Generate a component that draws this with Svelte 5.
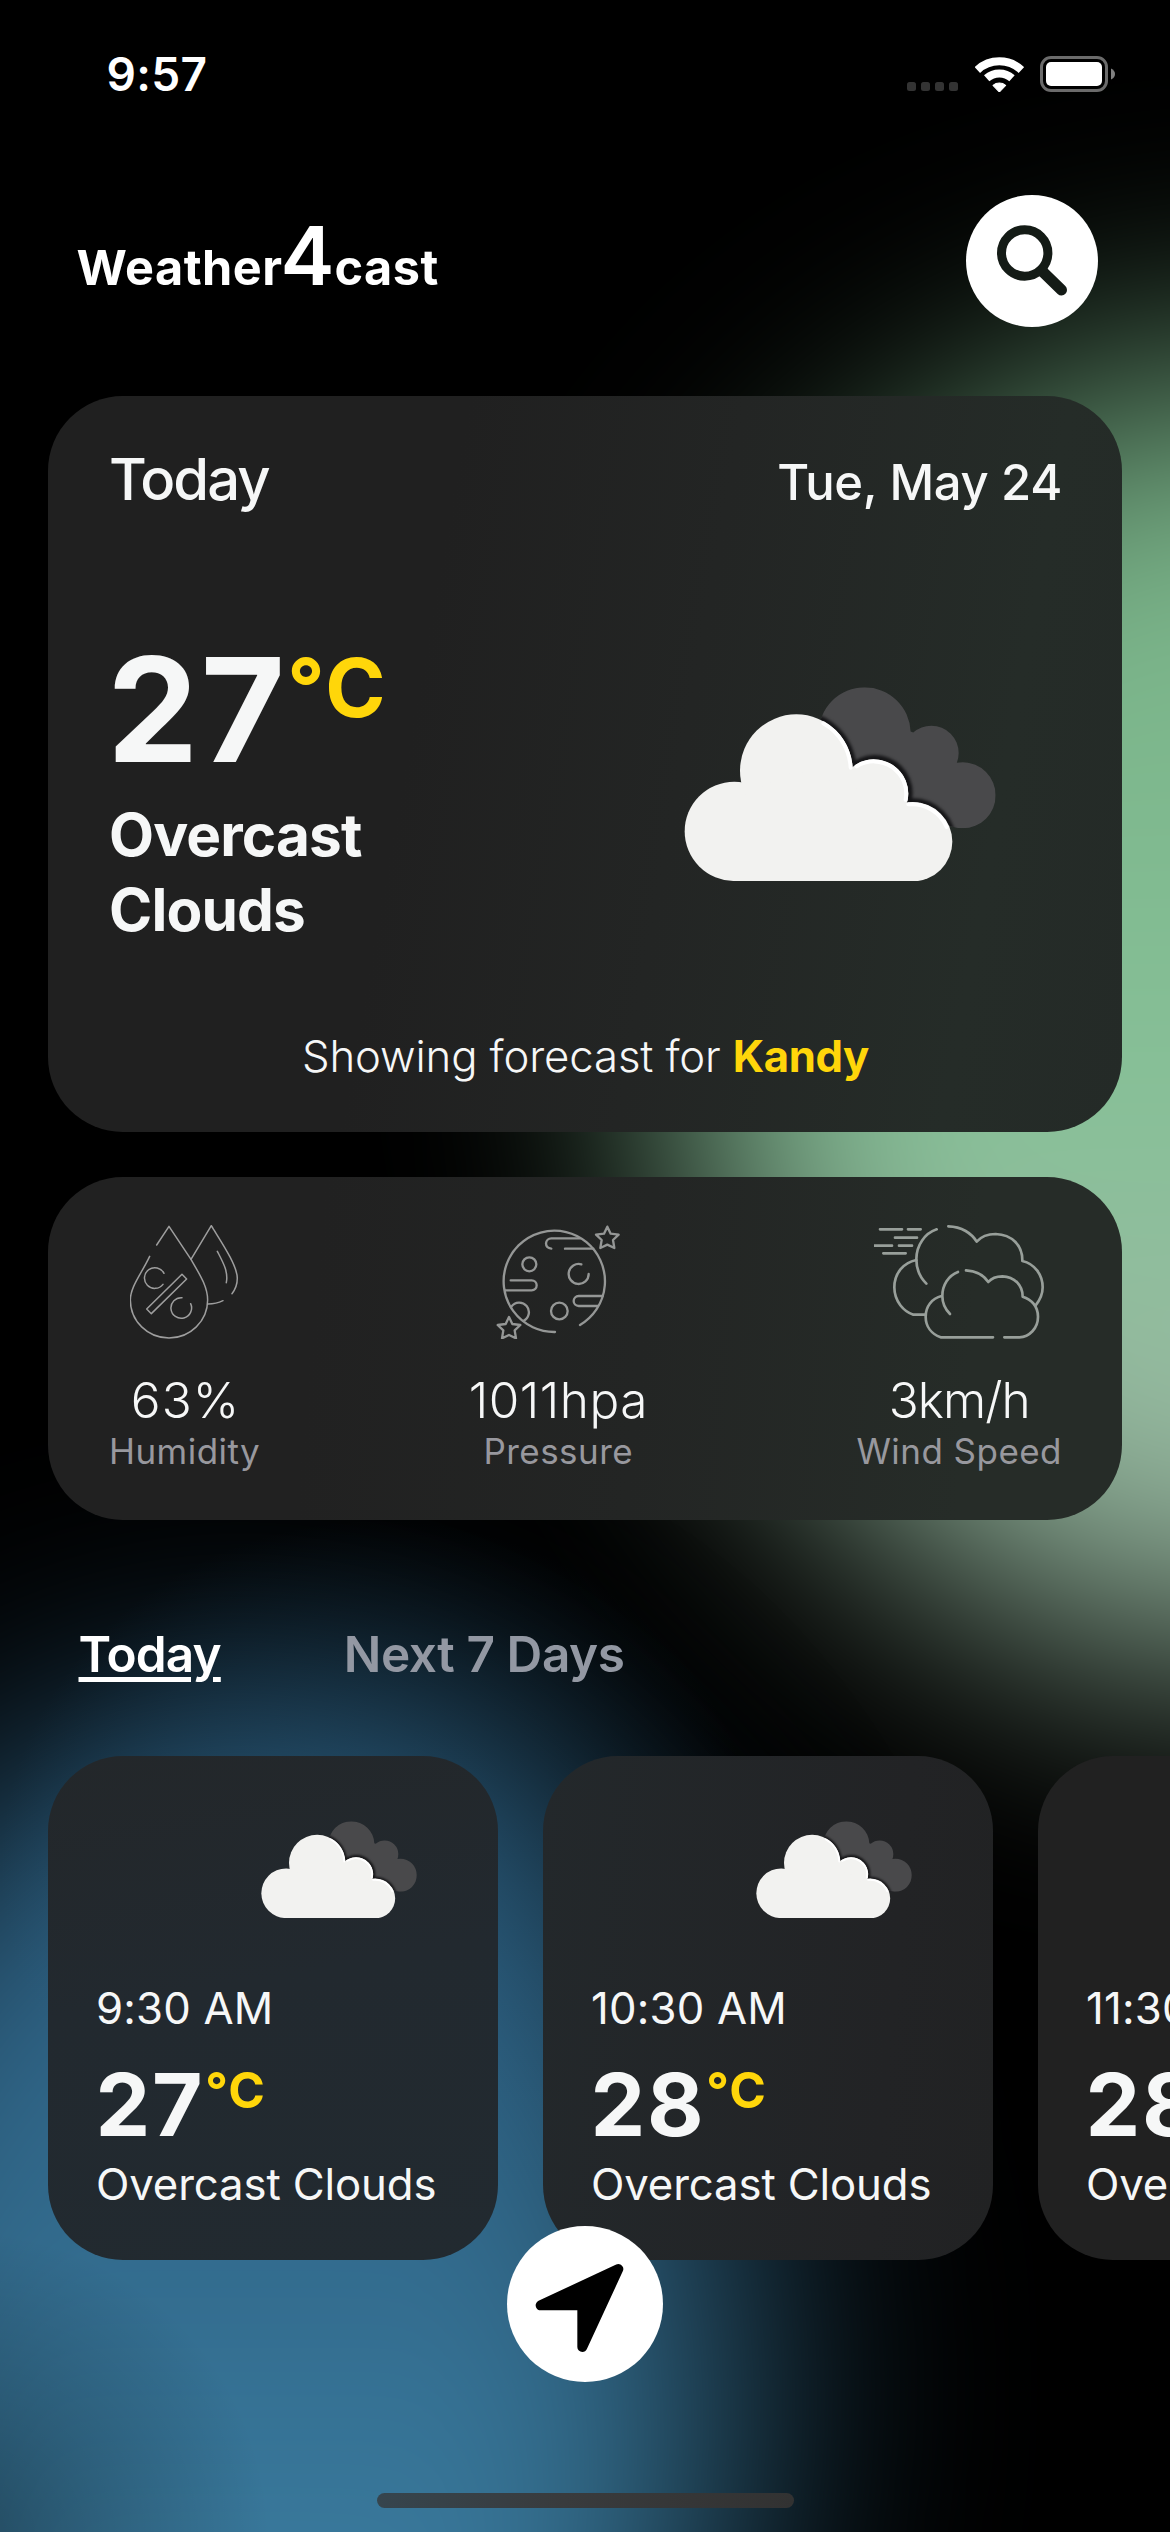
<script>
  const metrics = [
    { kind: 'humidity', value: '63%', label: 'Humidity' },
    { kind: 'pressure', value: '1011hpa', label: 'Pressure' },
    { kind: 'wind', value: '3km/h', label: 'Wind Speed' }
  ];
  const hours = [
    { time: '9:30 AM', temp: 27, sky: 'Overcast Clouds' },
    { time: '10:30 AM', temp: 28, sky: 'Overcast Clouds' },
    { time: '11:30 AM', temp: 28, sky: 'Overcast Clouds' }
  ];
</script>

{#snippet clouds(id)}
  <svg class="clouds" viewBox="130 140 936 584" aria-hidden="true">
    <defs>
      <clipPath id={id}>
        <circle cx="672" cy="279" r="138" />
        <circle cx="872" cy="338" r="82" />
        <circle cx="966" cy="465" r="99" />
        <path d="M600 250L800 270L880 300L940 400L960 564L760 500L600 380Z" />
      </clipPath>
    </defs>
    <g clip-path="url(#{id})">
      <rect x="130" y="140" width="936" height="584" fill="#49494b" />
      <g class="edge" fill="#151517">
        <circle cx="469" cy="389" r="178" />
        <circle cx="702" cy="458" r="114" />
        <circle cx="817" cy="603" r="129" />
      </g>
    </g>
    <g fill="#f2f2f0">
      <circle cx="281" cy="573" r="149" />
      <circle cx="467" cy="391" r="169" />
      <circle cx="700" cy="460" r="103" />
      <circle cx="816" cy="604" r="119" />
      <path d="M281 480L467 391L700 460L816 560V723H281Z" />
    </g>
    <g fill="none" stroke="#fff" stroke-width="12" stroke-linecap="round">
      <path d="M548 249A163 163 0 0 1 630 382" />
      <path d="M648 378A97 97 0 0 1 795 478" />
      <path d="M803 492A113 113 0 0 1 918 560" />
    </g>
  </svg>
{/snippet}

<div class="screen">
  <div class="glow green"></div>
  <div class="glow blue"></div>
  <div class="glow crest"></div>
  <div class="glow shade"></div>

  <div class="status">
    <span class="clock">9:57</span>
    <div class="indicators">
      <svg class="signal" viewBox="0 0 51 9" fill="#333">
        <rect width="9" height="9" rx="2.5" /><rect x="14" width="9" height="9" rx="2.5" />
        <rect x="28" width="9" height="9" rx="2.5" /><rect x="42" width="9" height="9" rx="2.5" />
      </svg>
      <svg class="wifi" viewBox="284 44 146 110">
        <g fill="none" stroke="#fff">
          <path stroke-width="24" d="M291 86A96.5 96.5 0 0 1 423 86" />
          <path stroke-width="24" d="M319 111A57 57 0 0 1 395 111" />
        </g>
        <path fill="#fff" stroke="#fff" stroke-width="3" stroke-linejoin="round" d="M357 152L338 132A30 30 0 0 1 376 132Z" />
      </svg>
      <svg class="battery" viewBox="0 0 76 36">
        <rect x="1.5" y="1.5" width="65" height="33" rx="9.5" fill="none" stroke="#6b6b6b" stroke-width="3" />
        <rect x="6" y="6" width="56" height="24" rx="5" fill="#fff" />
        <path d="M71 12.500Q75 14.500 75 18T71 23.500Z" fill="#808080" />
      </svg>
    </div>
  </div>

  <header>
    <h1>Weather<span class="four">4</span>cast</h1>
    <button class="search" aria-label="Search">
      <svg viewBox="0 0 132 132" fill="none" stroke="#141b16">
        <circle cx="58.700" cy="58" r="23.200" stroke-width="9" />
        <path d="M76 76L95.500 95" stroke-width="11" stroke-linecap="round" />
      </svg>
    </button>
  </header>

  <section class="panel current">
    <div class="topline">
      <span class="day">Today</span>
      <span class="date">Tue, May 24</span>
    </div>
    <div class="main">
      <div class="reading">
        <div class="temp"><span class="num">27</span><span class="unit">°C</span></div>
        <div class="sky">Overcast<br />Clouds</div>
      </div>
      {@render clouds('clouds-main')}
    </div>
    <p class="place">Showing forecast for <b>Kandy</b></p>
  </section>

  <section class="panel metrics">
    {#each metrics as m}
      <div class="metric">
        {#if m.kind === 'humidity'}
          <svg class="humidity" viewBox="150 105 325 342" stroke="#9e9e9e" stroke-width="4.5">
            <path d="M230 165L267 109L333 208C360 255 383 290 383 330A116 114 0 0 1 151 330C151 290 185 250 209 199" />
            <path d="M333 208L394 107C420 150 472 225 472 265C472 285 465 300 456 311" />
            <path d="M429 332C415 339 400 342 384 342M412 184C428 215 446 245 439 278" />
            <path d="M252 250A31 31 0 1 0 249 283M306 323A31 31 0 1 0 332 341" />
            <path d="M306 253L320 267L214 371L200 357Z" />
          </svg>
        {:else if m.kind === 'pressure'}
          <svg class="pressure" viewBox="168 105 372 342" stroke="#959796" stroke-width="7">
            <path d="M420 405A152 152 0 1 0 345 426" />
            <path d="M420 145H334A16 16 0 0 0 318 160C318 168 324 175 334 176M375 176H460" />
            <circle cx="268" cy="223" r="21" /><circle cx="358" cy="363" r="25" />
            <path d="M424 223A30 30 0 1 0 446 252M214 350A29 29 0 1 1 250 393" />
            <path d="M212 271H275A15 15 0 0 1 275 301H195M488 318H416A15 15 0 0 0 416 348H474" />
            <path d="M502 110L512 131L536 134L519 150L523 174L502 164L481 174L485 150L468 134L492 131Z" />
            <path d="M207 381L217 402L241 405L224 421L228 445L207 435L186 445L190 421L173 405L197 402Z" />
          </svg>
        {:else}
          <svg class="wind" viewBox="132 105 510 342" stroke="#989f9a" stroke-width="8">
            <path d="M150 118H216M234 118H272M195 143H261M133 167H186M207 167H246M160 190H227" />
            <path d="M320 118C285 130 259 165 259 208C259 240 270 262 289 281" />
            <path d="M259 210C220 218 193 250 193 292C193 335 222 365 250 374H286" />
            <path d="M355 109C395 110 425 130 440 155C455 138 475 132 497 132C545 134 578 165 577 213C615 222 638 255 638 292C638 312 630 330 617 346" />
            <path d="M384 246C355 257 337 285 337 318C337 340 346 358 360 372" />
            <path d="M335 318C305 325 287 350 287 380C287 410 305 432 332 442H489" />
            <path d="M408 241C440 243 462 256 475 276C485 264 500 259 517 259C553 260 578 285 578 320C605 328 624 350 624 380C624 415 598 441 568 442H523" />
          </svg>
        {/if}
        <span class="value {m.kind}-value">{m.value}</span>
        <span class="label">{m.label}</span>
      </div>
    {/each}
  </section>

  <nav class="tabs">
    <span class="tab active">Today</span>
    <span class="tab">Next 7 Days</span>
  </nav>

  <section class="hours">
    {#each hours as h, i}
      <article class="panel hour">
        {@render clouds(`clouds-${i}`)}
        <div class="time">{h.time}</div>
        <div class="temp"><span class="num">{h.temp}</span><span class="unit">°C</span></div>
        <div class="sky">{h.sky}</div>
      </article>
    {/each}
  </section>

  <button class="locate" aria-label="Current location">
    <svg viewBox="81 78 468 468">
      <path d="M415 207L182 316H307V441Z" stroke="#000" stroke-width="30" stroke-linejoin="round" />
    </svg>
  </button>
  <div class="home-bar"></div>
</div>

<style>
  :global(body) { background: #000; }
  .screen {
    position: relative;
    width: 1170px;
    height: 2532px;
    overflow: hidden;
    isolation: isolate;
    background: #000;
    color: #f6f7f7;
    font-family: Inter, 'Liberation Sans', sans-serif;
    white-space: nowrap;
  }
  .glow { position: absolute; z-index: -1; border-radius: 50%; }
  .green {
    left: 675px; top: 370px; width: 1150px; height: 1290px;
    background: linear-gradient(#7ab489 20%, #89c39a 60%, #98b9a1 78%);
    filter: blur(130px);
  }
  .blue {
    left: -250px; top: 1720px; width: 980px; height: 1300px;
    background: linear-gradient(#2d6186, #326a8c 40%, #3b7da0 70%);
    filter: blur(135px);
  }
  .crest {
    left: 0; top: 1520px; width: 760px; height: 700px;
    background: radial-gradient(closest-side, rgba(45, 100, 136, .5), rgba(45, 100, 136, .25) 50%, rgba(45, 100, 136, 0));
  }
  .shade {
    left: -350px; top: 2230px; width: 620px; height: 620px;
    background: radial-gradient(closest-side, rgba(0, 0, 0, .35), transparent);
  }
  svg { display: block; }
  button { border: 0; padding: 0; border-radius: 50%; background: #fff; }

  .status {
    height: 148px; box-sizing: border-box; padding: 0 54px 0 106.500px;
    display: flex; align-items: center; justify-content: space-between;
  }
  .clock { color: #fff; font-size: 46px; font-weight: 600; letter-spacing: .33px; }
  .indicators { display: flex; align-items: center; }
  .signal { width: 51px; height: 9px; margin: 25px 17px 0 0; }
  .wifi { width: 48.700px; height: 36.700px; margin-right: 16.500px; }
  .battery { width: 76px; height: 36px; }

  header {
    margin-top: 47px; height: 132px; padding: 0 72px 0 76.500px;
    display: flex; justify-content: space-between; align-items: flex-start;
  }
  h1 { margin: 0; color: #fff; font-size: 48.600px; line-height: 146px; font-weight: 700; letter-spacing: .5px; }
  .four { margin-left: -2px; font-size: 81px; font-weight: 600; line-height: 0; letter-spacing: 0; }
  .search { width: 132px; height: 132px; }

  .panel { border-radius: 75px; }
  .current { background: linear-gradient(100deg, #202020 35%, #232524 58%, #252c28 85%, #242a27); }
  .metrics { background: linear-gradient(95deg, #212121 25%, #232524 55%, #262c28 85%); }
  .hour { background: #212121; }
  .hour:nth-child(1) { background: linear-gradient(170deg, #23272a, #22292f 45%, #222a30); }
  .hour:nth-child(2) { background: linear-gradient(95deg, #23282b, #222325 75%, #212223); }

  .current { box-sizing: border-box; margin: 69px 48px 0; height: 736px; padding: 47px 60px 0 61px; }
  .topline { display: flex; justify-content: space-between; align-items: baseline; height: 73px; line-height: 73px; }
  .day { font-size: 58px; font-weight: 500; letter-spacing: -2px; }
  .date { font-size: 49px; font-weight: 500; letter-spacing: -.35px; }
  .main { margin-top: 120.700px; display: flex; justify-content: space-between; align-items: flex-start; }
  .temp { display: flex; align-items: flex-start; font-weight: 700; }
  .unit { color: #ffd60a; }
  .current .temp { margin-left: -2px; font-size: 145px; line-height: 145px; letter-spacing: 2.300px; }
  .current .unit { font-size: 81.500px; line-height: 101px; letter-spacing: 1.900px; font-weight: 700; }
  .current .sky { margin-top: 15px; font-size: 58.500px; line-height: 75.500px; font-weight: 700; letter-spacing: -.87px; }
  .edge { filter: blur(5px); }
  .current .clouds { width: 312px; height: 194.700px; margin: 50px 66px 0 0; }
  .place { margin: 79.500px 0 0; text-align: center; font-size: 43.700px; line-height: 60px; font-weight: 300; letter-spacing: -.12px; }
  .place b { color: #ffd60a; font-weight: 700; letter-spacing: -.42px; }

  .metrics {
    box-sizing: border-box; margin: 45px 48px 0; height: 343px; padding: 48px 60px 0 61px;
    display: flex; justify-content: space-between;
  }
  .metric { display: flex; flex-direction: column; align-items: center; }
  .metric svg { height: 114px; fill: none; stroke-linejoin: round; stroke-linecap: round; }
  .humidity { width: 108.300px; }
  .pressure { width: 124px; }
  .wind { width: 170px; }
  .value { margin-top: 31px; font-size: 49.500px; line-height: 60px; font-weight: 300; letter-spacing: .5px; }
  .humidity-value { padding-left: 2px; letter-spacing: 1.100px; }
  .wind-value { letter-spacing: -.97px; }
  .label { margin-top: -1px; font-size: 35px; line-height: 44px; letter-spacing: .45px; color: #98989e; }

  .tabs { margin-top: 104px; padding-left: 78.500px; display: flex; gap: 123px; }
  .tab { font-size: 49.500px; line-height: 60px; font-weight: 600; letter-spacing: -.42px; color: #9398a3; }
  .active {
    color: #fff; letter-spacing: -.86px;
    text-decoration: underline; text-decoration-thickness: 5px; text-underline-offset: 5px;
  }

  .hours { margin-top: 72px; padding-left: 48px; display: flex; gap: 45px; }
  .hour { flex: 0 0 450px; height: 504px; box-sizing: border-box; padding: 64.500px 48px 0; }
  .hour .clouds { width: 156px; height: 97.500px; margin: 0 33px 0 auto; }
  .time { margin-top: 60.500px; font-size: 43.700px; line-height: 60px; letter-spacing: .2px; }
  .hour .temp { margin: 22px 0 0 -.5px; font-size: 87px; line-height: 87px; letter-spacing: 1.700px; }
  .hour .num { margin-right: 1px; }
  .hour .unit { font-size: 49.500px; line-height: 59px; font-weight: 700; letter-spacing: 1px; }
  .hour .sky { margin-top: 7.500px; font-size: 43.700px; line-height: 60px; letter-spacing: -.12px; }

  .locate { position: absolute; left: 507px; top: 2226px; width: 156px; height: 156px; }
  .home-bar {
    position: absolute; left: 377px; top: 2493px; width: 417px; height: 15px; border-radius: 8px;
    background: linear-gradient(90deg, #36454e, #393b3d 45%, #323232);
  }
</style>
